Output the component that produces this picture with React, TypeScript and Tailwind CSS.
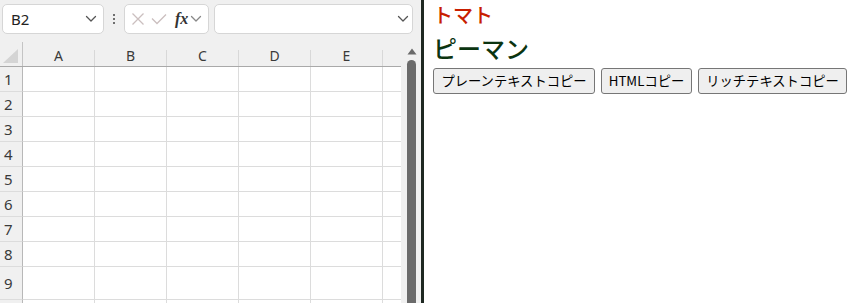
import React from "react";

const cols = ["A", "B", "C", "D", "E"];
const rows = [
  { n: "1", h: "h-[25px]" },
  { n: "2", h: "h-[25px]" },
  { n: "3", h: "h-[25px]" },
  { n: "4", h: "h-[25px]" },
  { n: "5", h: "h-[25px]" },
  { n: "6", h: "h-[25px]" },
  { n: "7", h: "h-[25px]" },
  { n: "8", h: "h-[25px]" },
  { n: "9", h: "h-[33px]" },
  { n: "", h: "h-[25px]" },
];

function Chevron({ color = "#555" }: { color?: string }) {
  return (
    <svg width="12" height="8" viewBox="0 0 12 8" fill="none" className="shrink-0">
      <path d="M1.5 1.5L6 6L10.5 1.5" stroke={color} strokeWidth="1.3" strokeLinecap="round" strokeLinejoin="round" />
    </svg>
  );
}

function Toolbar() {
  return (
    <div className="h-[42px] flex items-start pt-[4px] shrink-0">
      {/* Name box */}
      <div className="ml-[2px] w-[102px] h-[30px] bg-white border border-[#d6d6d6] rounded-[5px] flex items-center pl-[8px] pr-[6px]">
        <span className="flex-1 text-[15px] text-[#222] font-['Noto_Sans',sans-serif]">B2</span>
        <Chevron />
      </div>
      {/* dots */}
      <div className="w-[20px] h-[30px] flex flex-col items-center justify-center gap-[2px]">
        <div className="w-[2px] h-[2px] bg-[#444] rounded-full" />
        <div className="w-[2px] h-[2px] bg-[#444] rounded-full" />
        <div className="w-[2px] h-[2px] bg-[#444] rounded-full" />
      </div>
      {/* formula buttons */}
      <div className="w-[85px] h-[30px] bg-white border border-[#d6d6d6] rounded-[5px] flex items-center pl-[6px] pr-[3px]">
        <svg width="14" height="14" viewBox="0 0 14 14" className="shrink-0">
          <path d="M1.5 1.5L12.5 12.5M12.5 1.5L1.5 12.5" stroke="#cbbfbf" strokeWidth="1.3" />
        </svg>
        <svg width="16" height="12" viewBox="0 0 16 12" className="shrink-0 ml-[6px]">
          <path d="M1 5.5L6 10.5L15 1.5" stroke="#cbbfbf" strokeWidth="1.3" fill="none" />
        </svg>
        <span className="ml-[8px] text-[16px] italic font-bold leading-none text-[#333] font-['Liberation_Serif',serif]">fx</span>
        <span className="ml-[2px]">
          <Chevron color="#888" />
        </span>
      </div>
      {/* formula bar */}
      <div className="ml-[5px] w-[199px] h-[30px] bg-white border border-[#d6d6d6] rounded-[5px] flex items-center justify-end pr-[3px]">
        <Chevron />
      </div>
    </div>
  );
}

function Grid() {
  return (
    <div className="w-[401px] flex flex-col overflow-hidden">
      {/* column header */}
      <div className="h-[25px] flex border-b border-[#a9a9a9] shrink-0">
        <div className="w-[23px] shrink-0 border-r border-[#c4c4c4] flex items-end justify-center pb-[3px]">
          <svg width="16" height="14" viewBox="0 0 16 14">
            <path d="M15 0V14H0Z" fill="#d4d4d4" />
          </svg>
        </div>
        {cols.map((c) => (
          <div key={c} className="w-[72px] shrink-0 flex">
            <div className="flex-1 flex items-center justify-center text-[14px] text-[#3a3a3a] font-['Noto_Sans',sans-serif] pt-[2px]">
              {c}
            </div>
            <div className="w-px h-[16px] self-end bg-[#d8d8d8]" />
          </div>
        ))}
        <div className="flex-1" />
      </div>
      {/* rows */}
      {rows.map((r, i) => (
        <div key={i} className={`${r.h} flex shrink-0`}>
          <div className="w-[23px] shrink-0 border-r border-[#b8b8b8] border-b border-b-[#dcdcdc] flex items-center pl-[4px] text-[15px] text-[#3a3a3a] font-['Noto_Sans',sans-serif]">
            {r.n}
          </div>
          {cols.map((c) => (
            <div key={c} className="w-[72px] shrink-0 bg-white border-r border-b border-[#dcdcdc]" />
          ))}
          <div className="flex-1 bg-white border-b border-[#dcdcdc]" />
        </div>
      ))}
    </div>
  );
}

function ScrollBar() {
  return (
    <div className="w-[20px] flex flex-col items-center shrink-0">
      <div className="h-[6px]" />
      <svg width="10" height="7" viewBox="0 0 10 7" className="ml-[1px]">
        <path d="M5 0.5L9.5 6.5H0.5Z" fill="#6a6a6a" />
      </svg>
      <div className="h-[5px]" />
      <div className="w-[9px] flex-1 bg-[#6b6b6b] rounded-t-full ml-[1px]" />
    </div>
  );
}

export default function App() {
  return (
    <div className="w-[855px] h-[303px] flex overflow-hidden bg-white">
      {/* Excel side */}
      <div className="w-[421px] shrink-0 bg-[#f0f0f0] flex flex-col">
        <Toolbar />
        <div className="flex flex-1 min-h-0">
          <Grid />
          <ScrollBar />
        </div>
      </div>
      <div className="w-[3px] shrink-0 bg-[#1e2822]" />
      {/* browser side */}
      <div className="flex-1 bg-white pl-[9px] font-['Noto_Sans_CJK_JP',sans-serif]">
        <div className="h-[30px] text-[20px] leading-[30px] font-medium text-[#c81e00]">トマト</div>
        <div className="h-[36px] text-[24px] leading-[36px] font-medium text-[#0b3410]">ピーマン</div>
        <div className="mt-[2px] flex gap-[6px]">
          <button className="w-[162px] h-[26px] bg-[#efefef] border border-[#767676] rounded-[3px] text-[13.3px] text-black whitespace-nowrap">
            プレーンテキストコピー
          </button>
          <button className="w-[91px] h-[26px] bg-[#efefef] border border-[#767676] rounded-[3px] text-[13.3px] text-black whitespace-nowrap">
            HTMLコピー
          </button>
          <button className="w-[149px] h-[26px] bg-[#efefef] border border-[#767676] rounded-[3px] text-[13.3px] text-black whitespace-nowrap">
            リッチテキストコピー
          </button>
        </div>
      </div>
    </div>
  );
}
